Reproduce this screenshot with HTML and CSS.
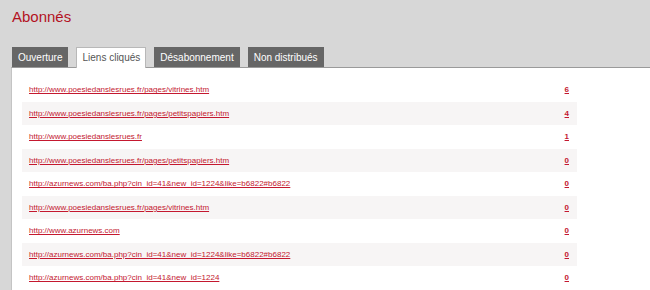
FILE: index.html
```html
<!DOCTYPE html>
<html lang="fr">
<head>
    <meta charset="UTF-8">
    <meta name="viewport" content="width=device-width, initial-scale=1.0">
    <title>Abonnés - Liens cliqués</title>
    <link rel="stylesheet" href="styles.css">
</head>
<body>
    <h1 class="page-title">Abonnés</h1>

    <div class="tabs">
        <a class="tab" href="#">Ouverture</a>
        <a class="tab active" href="#">Liens cliqués</a>
        <a class="tab" href="#">Désabonnement</a>
        <a class="tab" href="#">Non distribués</a>
    </div>

    <div class="panel">
        <div class="links">
            <div class="link-row">
                <a href="#">http://www.poesiedanslesrues.fr/pages/vitrines.htm</a>
                <a class="count" href="#">6</a>
            </div>
            <div class="link-row">
                <a href="#">http://www.poesiedanslesrues.fr/pages/petitspapiers.htm</a>
                <a class="count" href="#">4</a>
            </div>
            <div class="link-row">
                <a href="#">http://www.poesiedanslesrues.fr</a>
                <a class="count" href="#">1</a>
            </div>
            <div class="link-row">
                <a href="#">http://www.poesiedanslesrues.fr/pages/petitspapiers.htm</a>
                <a class="count" href="#">0</a>
            </div>
            <div class="link-row">
                <a href="#">http://azurnews.com/ba.php?cin_id=41&amp;new_id=1224&amp;like=b6822#b6822</a>
                <a class="count" href="#">0</a>
            </div>
            <div class="link-row">
                <a href="#">http://www.poesiedanslesrues.fr/pages/vitrines.htm</a>
                <a class="count" href="#">0</a>
            </div>
            <div class="link-row">
                <a href="#">http://www.azurnews.com</a>
                <a class="count" href="#">0</a>
            </div>
            <div class="link-row">
                <a href="#">http://azurnews.com/ba.php?cin_id=41&amp;new_id=1224&amp;like=b6822#b6822</a>
                <a class="count" href="#">0</a>
            </div>
            <div class="link-row">
                <a href="#">http://azurnews.com/ba.php?cin_id=41&amp;new_id=1224</a>
                <a class="count" href="#">0</a>
            </div>
            <div class="link-row"></div>
        </div>
    </div>
</body>
</html>
```

FILE: styles.css
```css
* {
    margin: 0;
    padding: 0;
    box-sizing: border-box;
}

body {
    font-family: "Liberation Sans", Arial, sans-serif;
    background: #d7d7d7;
    padding-top: 8px;
    overflow: hidden;
}

.page-title {
    margin-left: 12px;
    font-size: 15px;
    line-height: 18px;
    font-weight: normal;
    color: #b3121f;
}

.tabs {
    display: flex;
    align-items: flex-end;
    gap: 8px;
    margin-top: 21px;
    padding-left: 12px;
}

.tab {
    display: flex;
    align-items: center;
    height: 20px;
    padding: 0 6px;
    background: #666666;
    color: #ffffff;
    font-size: 10px;
    text-decoration: none;
}

.tab.active {
    height: 21px;
    padding: 0 5px 1px;
    background: #ffffff;
    color: #555555;
    border: 1px solid #b8b8b8;
    border-bottom: none;
    margin-bottom: -1px;
    position: relative;
}

.panel {
    margin-left: 11px;
    background: #ffffff;
    border-top: 1px solid #9a9a9a;
    border-left: 1px solid #c4c4c4;
    padding: 10px 0 0 10px;
    min-height: 240px;
}

.links {
    width: 555px;
}

.link-row {
    display: flex;
    justify-content: space-between;
    align-items: center;
    height: 23.5px;
    padding: 0 7px;
    font-size: 8px;
}

.link-row:nth-child(even) {
    background: #f7f5f5;
}

.link-row a {
    color: #c4182f;
}

.link-row .count {
    font-weight: bold;
    margin-right: 1px;
}
```
